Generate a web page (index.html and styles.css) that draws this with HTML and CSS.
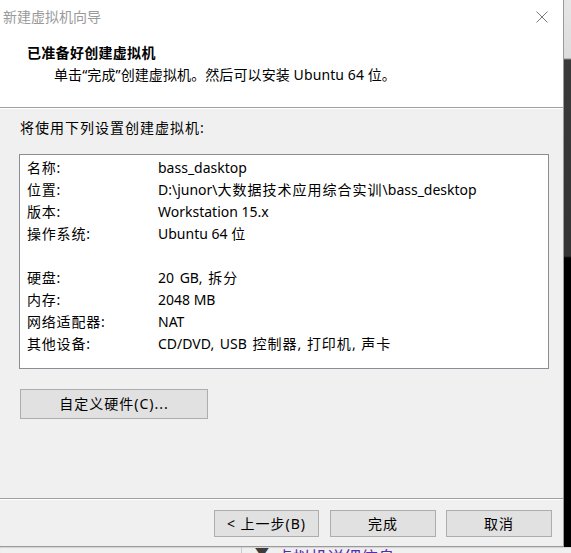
FILE: index.html
```html
<!DOCTYPE html>
<html lang="zh-CN">
<head>
<meta charset="utf-8">
<title>新建虚拟机向导</title>
<link rel="stylesheet" href="styles.css">
</head>
<body>
<div class="screen">
  <div class="dialog">
    <div class="top">
      <div class="titlebar">
        <span class="title">新建虚拟机向导</span>
        <svg class="close" width="12" height="12" viewBox="0 0 12 12"><path d="M0.5 0.5 L11.5 11.5 M11.5 0.5 L0.5 11.5" stroke="#7a7a7a" stroke-width="1" fill="none"/></svg>
      </div>
      <div class="header">
        <div class="h-title">已准备好创建虚拟机</div>
        <div class="h-sub">单击“完成”创建虚拟机。然后可以安装 Ubuntu 64 位。</div>
      </div>
    </div>
    <div class="body">
      <div class="intro">将使用下列设置创建虚拟机:</div>
      <div class="summary">
        <div class="row"><span class="k">名称:</span><span class="v">bass_dasktop</span></div>
        <div class="row"><span class="k">位置:</span><span class="v">D:\junor\<span class="zh">大数据技术应用综合实训</span>\bass_desktop</span></div>
        <div class="row"><span class="k">版本:</span><span class="v">Workstation 15.x</span></div>
        <div class="row"><span class="k">操作系统:</span><span class="v">Ubuntu 64 <span class="zh">位</span></span></div>
        <div class="row"></div>
        <div class="row"><span class="k">硬盘:</span><span class="v list">20 GB, <span class="zh">拆分</span></span></div>
        <div class="row"><span class="k">内存:</span><span class="v">2048 MB</span></div>
        <div class="row"><span class="k">网络适配器:</span><span class="v">NAT</span></div>
        <div class="row"><span class="k">其他设备:</span><span class="v list">CD/DVD, USB <span class="zh">控制器</span>, <span class="zh">打印机</span>, <span class="zh">声卡</span></span></div>
      </div>
      <button class="btn custom">自定义硬件(C)...</button>
    </div>
    <div class="footer">
      <button class="btn nav back">&lt; 上一步(B)</button>
      <button class="btn nav">完成</button>
      <button class="btn nav">取消</button>
    </div>
  </div>
  <div class="side"></div>
  <div class="under">
    <div class="under-left"></div>
    <span class="tri">▼</span>
    <span class="under-text">虚拟机详细信息</span>
  </div>
</div>
</body>
</html>
```

FILE: styles.css
```css
* { box-sizing: border-box; }
html, body { margin: 0; padding: 0; }
body {
  width: 571px;
  height: 553px;
  overflow: hidden;
  font-family: "Noto Sans", "Noto Sans CJK SC", sans-serif;
  font-size: 14px;
  color: #000;
  background: #f0f0f0;
}
.screen {
  display: grid;
  grid-template-columns: 564px 7px;
  grid-template-rows: 547px 6px;
  width: 571px;
  height: 553px;
}
.dialog {
  display: flex;
  flex-direction: column;
  background: #f0f0f0;
  border-right: 1px solid #9a9a9a;
  border-bottom: 1px solid #9a9a9a;
}
.top {
  background: #fff;
  height: 108px;
  border-bottom: 1px solid #a0a0a0;
  box-shadow: 0 1px 0 #ffffff;
}
.titlebar {
  height: 34px;
  display: flex;
  align-items: center;
  justify-content: space-between;
  padding: 0 15px 0 3px;
}
.title {
  color: #9a9a9a;
  font-size: 14px;
  line-height: 20px;
}
.close { display: block; margin-top: -1px; }
.header { padding-top: 8px; }
.h-title {
  font-weight: bold;
  line-height: 22px;
  padding-left: 27px;
  letter-spacing: 0.3px;
}
.h-sub {
  line-height: 22px;
  padding-left: 54px;
  letter-spacing: 0.1px;
}
.body {
  flex: 1;
  display: flex;
  flex-direction: column;
  align-items: flex-start;
  padding: 10px 0 0 19px;
  border-bottom: 1px solid #a0a0a0;
  box-shadow: 0 1px 0 #ffffff;
}
.intro {
  line-height: 20px;
  padding-left: 1px;
  letter-spacing: 1px;
}
.summary {
  margin-top: 16px;
  width: 530px;
  height: 215px;
  background: #fff;
  border: 1px solid #8a8d93;
  padding: 2px 0 0 7px;
}
.row {
  display: flex;
  height: 22px;
  line-height: 22px;
  white-space: nowrap;
}
.k { width: 131px; flex: none; letter-spacing: 0.8px; }
.v { flex: none; }
.list { word-spacing: 2px; }
.zh { letter-spacing: 1px; }
.btn {
  font-family: "Noto Sans", "Noto Sans CJK SC", sans-serif;
  font-size: 14px;
  color: #000;
  background: #e1e1e1;
  border: 1px solid #adadad;
  padding: 0;
  margin: 0;
  line-height: 20px;
  letter-spacing: 1px;
}
.custom {
  margin-top: 20px;
  margin-left: 1px;
  width: 188px;
  height: 30px;
}
.footer {
  height: 47px;
  display: flex;
  justify-content: flex-end;
  align-items: flex-start;
  gap: 10px;
  padding: 11px 11px 0 0;
}
.nav {
  width: 106px;
  height: 27px;
}
.back {
  width: 105px;
  margin-right: 1px;
}
.side {
  background: linear-gradient(to bottom, #e6e6e6 0, #dcdcdc 58px, #3a3a3a 60px, #343434 256px, #000 258px, #000 100%);
}
.under {
  grid-column: 1 / span 2;
  display: flex;
  align-items: flex-start;
  overflow: hidden;
  background: #f0f0f0;
  box-shadow: inset 0 1px 1px rgba(0,0,0,0.12);
}
.under-left {
  width: 242px;
  height: 6px;
  border-right: 1px solid #c8c8c8;
  flex: none;
}
.tri {
  margin-left: 14px;
  font-size: 12px;
  line-height: 12px;
  color: #3c3c3c;
  transform: scaleX(1.2);
}
.under-text {
  margin-left: 8px;
  font-size: 17px;
  line-height: 17px;
  color: #5b2aa6;
  margin-top: 1px;
  font-family: "Noto Sans CJK SC", sans-serif;
}
```
